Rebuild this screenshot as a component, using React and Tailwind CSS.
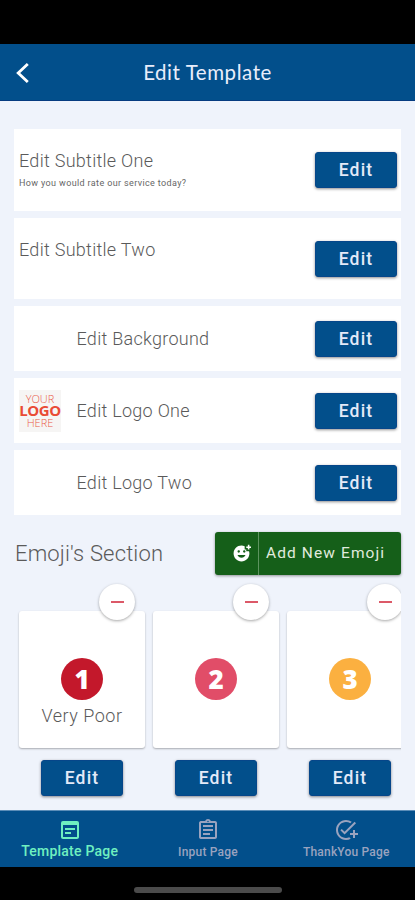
import {
    MdAddReaction, MdOutlineAddTask, MdOutlineAssignment, MdOutlineWysiwyg,
} from "react-icons/md";

const emojis = [
    { value: "1", label: "Very Poor", color: "bg-[#c3182b]" },
    { value: "2", label: "", color: "bg-[#e14d68]" },
    { value: "3", label: "", color: "bg-[#fbb040]" },
];

const tabs = [
    { label: "Template Page", icon: MdOutlineWysiwyg, active: true },
    { label: "Input Page", icon: MdOutlineAssignment },
    { label: "ThankYou Page", icon: MdOutlineAddTask },
];

function EditButton() {
    return (
        <button className="h-9 w-[82px] shrink-0 rounded-[3px] bg-[#024f8b] border border-[#06468a] pt-[2px] text-[17.5px] leading-none font-medium tracking-[1.15px] text-[#e4eaf8] shadow-[0_1px_3px_rgba(0,0,0,0.45)]">
            Edit
        </button>
    );
}

function Row({ title, subtitle, children, className }) {
    return (
        <div className={`flex items-center bg-white pr-1 pl-[5px] ${className}`}>
            {children}
            <div className="flex-1">
                <h2 className="pt-px text-[18px] leading-[22px] font-light tracking-[0.28px] text-[#5a5a5a]">{title}</h2>
                {subtitle !== undefined && (
                    <p className="mt-1 h-[15px] text-[9px] leading-[15px] tracking-[0.37px] whitespace-nowrap text-[#666]">
                        {subtitle}
                    </p>
                )}
            </div>
            <EditButton />
        </div>
    );
}

function Logo() {
    return (
        <div className="flex h-[42px] w-[42px] flex-col items-center justify-center bg-[#f6f5f4] font-['Open_Sans',sans-serif] text-[#ea5a49]">
            <span className="text-[11px] leading-[11px] font-light">YOUR</span>
            <span className="text-[15px] leading-[13px] font-bold tracking-[-0.4px] text-[#e94b35]">LOGO</span>
            <span className="text-[11px] leading-[12px] font-light">HERE</span>
        </div>
    );
}

export default function App() {
    return (
        <div className="flex h-[900px] w-[415px] flex-col overflow-hidden bg-[#eff3fb] font-[Roboto,sans-serif]">
            <div className="h-11 shrink-0 bg-black" />

            <header className="grid h-[57px] shrink-0 grid-cols-[60px_1fr_60px] items-center border-b border-[#063b80] bg-[#024f8b]">
                <svg viewBox="0 0 14 20" className="mt-0.5 ml-[15px] h-5 w-3.5" fill="none" stroke="#fff" strokeWidth="2.8">
                    <path d="M12.8 1 3.2 10l9.6 9" />
                </svg>
                <h1 className="text-center font-[Lato,sans-serif] text-[20.5px] tracking-[0.55px] text-[#e9edfb]">
                    Edit Template
                </h1>
            </header>

            <main className="flex h-[709px] shrink-0 flex-col px-[14px] pt-7">
                <section className="flex flex-col gap-[7px]">
                    <Row title="Edit Subtitle One" subtitle="How you would rate our service today?" className="h-[82px]" />
                    <Row title="Edit Subtitle Two" subtitle="" className="h-[81px]" />
                    <Row title="Edit Background" className="h-[65px]">
                        <div className="w-[57.5px]" />
                    </Row>
                    <Row title="Edit Logo One" className="h-[65px]">
                        <div className="w-[57.5px]"><Logo /></div>
                    </Row>
                    <Row title="Edit Logo Two" className="h-[65px]">
                        <div className="w-[57.5px]" />
                    </Row>
                </section>

                <div className="mt-[17px] flex h-[43px] shrink-0 items-center justify-between">
                    <h2 className="pl-px text-[22px] font-light tracking-[0.15px] text-[#5a5a5a]">Emoji's Section</h2>
                    <button className="flex h-[43px] w-[186px] items-center rounded-[3px] bg-[#155f19] text-[#e0ebde] shadow-[0_1px_3px_rgba(0,0,0,0.4)]">
                        <span className="flex h-full w-[44px] items-center justify-center border-r border-[#5d945f] pl-[9px]">
                            <MdAddReaction className="h-[19px] w-[19px] text-white" />
                        </span>
                        <span className="flex-1 pl-[7px] pt-px text-left text-[15.5px] tracking-[1.1px] whitespace-nowrap">
                            Add New Emoji
                        </span>
                    </button>
                </div>

                <section className="flex grow gap-2 overflow-hidden pt-9 pl-[5px]">
                    {emojis.map((emoji) => (
                        <div key={emoji.value} className="flex w-[126px] shrink-0 flex-col items-center">
                            <div className="relative flex h-[137px] w-full flex-col items-center rounded-[3px] bg-white pt-[47px] shadow-[0_1px_2px_rgba(0,0,0,0.3)]">
                                <span className="absolute -top-[27px] right-[10px] flex h-9 w-9 items-center justify-center rounded-full bg-white shadow-[0_1px_3px_rgba(0,0,0,0.35)]">
                                    <span className="h-[2px] w-[13px] bg-[#dc5968]" />
                                </span>
                                <span className={`flex h-[42px] w-[42px] items-center justify-center rounded-full font-['Open_Sans',sans-serif] text-[26px] leading-none font-extrabold text-white ${emoji.color}`}>
                                    {emoji.value}
                                </span>
                                <span className="mt-[5px] text-[18px] leading-[22px] font-light tracking-[0.5px] text-[#5a5a5a]">{emoji.label}</span>
                            </div>
                            <div className="mt-3">
                                <EditButton />
                            </div>
                        </div>
                    ))}
                </section>
            </main>

            <nav className="grid h-[57px] shrink-0 grid-cols-3 border-t border-[#5b8db8] bg-[#024f8b]">
                {tabs.map(({ label, icon: Icon, active }) => (
                    <div
                        key={label}
                        className={`flex flex-col items-center pt-[7px] pl-px font-medium whitespace-nowrap ${active ? "text-[#6ff0c0]" : "text-[#9aa3bf]"}`}
                    >
                        <Icon className="h-6 w-6" />
                        <span className={active ? "text-[14px] leading-[18px] tracking-[0.22px]" : "text-[12px] leading-[20px] tracking-[0.2px]"}>
                            {label}
                        </span>
                    </div>
                ))}
            </nav>

            <footer className="flex grow justify-center bg-black pt-5">
                <div className="h-1.5 w-[148px] rounded-full bg-[#4b4b4b]" />
            </footer>
        </div>
    );
}
